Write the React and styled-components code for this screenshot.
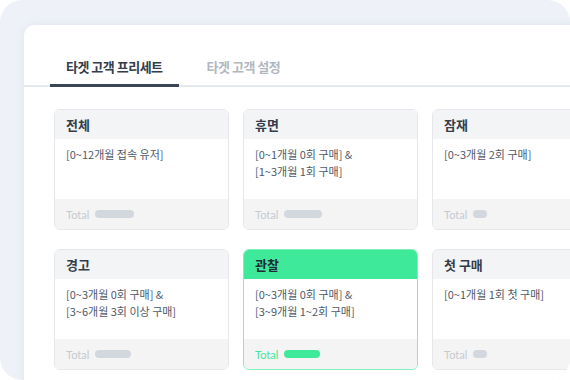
import React, { useState } from 'react';
import styled, { createGlobalStyle } from 'styled-components';

const GlobalStyle = createGlobalStyle`
  html, body {
    margin: 0;
    padding: 0;
    background: #ffffff;
  }
  body {
    font-family: 'Noto Sans CJK KR', 'Noto Sans', sans-serif;
  }
`;

const presets = [
  { name: '전체', lines: ['[0~12개월 접속 유저]'], total: 39 },
  { name: '휴면', lines: ['[0~1개월 0회 구매] &', '[1~3개월 1회 구매]'], total: 38 },
  { name: '잠재', lines: ['[0~3개월 2회 구매]'], total: 14 },
  { name: '경고', lines: ['[0~3개월 0회 구매] &', '[3~6개월 3회 이상 구매]'], total: 36 },
  { name: '관찰', lines: ['[0~3개월 0회 구매] &', '[3~9개월 1~2회 구매]'], total: 36 },
  { name: '첫 구매', lines: ['[0~1개월 1회 첫 구매]'], total: 14 },
];

function App() {
  const [activeTab, setActiveTab] = useState('preset');
  const [selected, setSelected] = useState('관찰');

  return (
    <>
      <GlobalStyle />
      <Frame>
        <Sheet>
          <TabBar>
            <Tab
              active={activeTab === 'preset'}
              onClick={() => setActiveTab('preset')}
            >
              타겟 고객 프리세트
            </Tab>
            <Tab
              active={activeTab === 'custom'}
              onClick={() => setActiveTab('custom')}
            >
              타겟 고객 설정
            </Tab>
          </TabBar>
          <Grid>
            {presets.map((preset) => {
              const on = preset.name === selected;
              return (
                <Card key={preset.name} active={on} onClick={() => setSelected(preset.name)}>
                  <CardHead active={on}>{preset.name}</CardHead>
                  <CardBody>
                    {preset.lines.map((line) => (
                      <div key={line}>{line}</div>
                    ))}
                  </CardBody>
                  <CardFoot>
                    <TotalLabel active={on}>Total</TotalLabel>
                    <Pill active={on} style={{ width: preset.total }} />
                  </CardFoot>
                </Card>
              );
            })}
          </Grid>
        </Sheet>
      </Frame>
    </>
  );
}

const Frame = styled.div`
  width: 570px;
  height: 380px;
  box-sizing: border-box;
  background: #eef2f8;
  border-radius: 22px;
  overflow: hidden;
  padding: 25px 0 0 24px;
`;

const Sheet = styled.div`
  width: 620px;
  height: 420px;
  background: #ffffff;
  border-top-left-radius: 10px;
  box-shadow: 0 0 10px rgba(120, 140, 170, 0.12);
  padding-top: 28px;
  box-sizing: border-box;
`;

const TabBar = styled.div`
  display: flex;
  gap: 12px;
  padding-left: 26px;
  border-bottom: 2px solid #e5e8ed;
`;

const Tab = styled.div`
  padding: 4px 16px 7px;
  margin-bottom: -2px;
  font-size: 13px;
  line-height: 20px;
  font-weight: 700;
  letter-spacing: -0.5px;
  cursor: pointer;
  color: ${(p) => (p.active ? '#333d4b' : '#b2b7bf')};
  border-bottom: 3px solid ${(p) => (p.active ? '#3a4556' : 'transparent')};
`;

const Grid = styled.div`
  display: grid;
  grid-template-columns: repeat(3, 175px);
  grid-auto-rows: 121px;
  column-gap: 14px;
  row-gap: 19px;
  padding: 22px 0 0 30px;
`;

const Card = styled.div`
  display: flex;
  flex-direction: column;
  box-sizing: border-box;
  border: 1px solid ${(p) => (p.active ? '#7ef0b8' : '#e5e7eb')};
  border-radius: 6px;
  overflow: hidden;
  cursor: pointer;
`;

const CardHead = styled.div`
  height: 29px;
  flex: none;
  display: flex;
  align-items: center;
  padding: 0 11px;
  font-size: 13px;
  font-weight: 700;
  color: ${(p) => (p.active ? '#1f2c36' : '#333d4b')};
  background: ${(p) => (p.active ? '#3eea9a' : '#f3f4f6')};
`;

const CardBody = styled.div`
  flex: 1;
  padding: 7px 11px 0;
  font-size: 11px;
  line-height: 17px;
  color: #4e5968;
  background: #ffffff;
`;

const CardFoot = styled.div`
  height: 30px;
  flex: none;
  display: flex;
  align-items: center;
  gap: 6px;
  padding: 0 11px;
  background: #f4f4f5;
`;

const TotalLabel = styled.span`
  font-family: 'Lato', 'Noto Sans', sans-serif;
  font-size: 11px;
  color: ${(p) => (p.active ? '#3ee69a' : '#c6cad0')};
`;

const Pill = styled.span`
  height: 8px;
  border-radius: 4px;
  background: ${(p) => (p.active ? '#3ee99a' : '#d3d7de')};
`;

export default App;
